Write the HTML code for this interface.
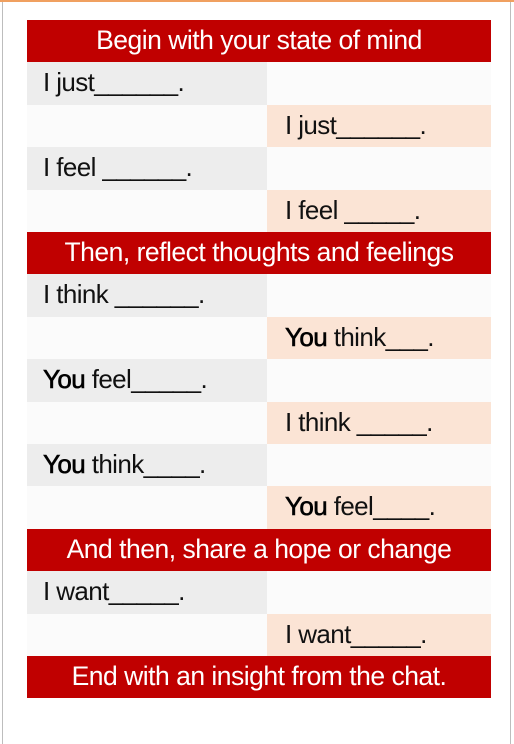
<!DOCTYPE html>
<html><head><meta charset="utf-8"><style>
html,body{margin:0;padding:0;}
body{width:514px;height:744px;position:relative;background:#fff;overflow:hidden;font-family:"Liberation Sans",sans-serif;}
.top{position:absolute;left:0;top:0;width:514px;height:2px;background:#f0a060;}
.lb{position:absolute;left:2px;top:2px;width:1px;height:742px;background:#bdbdbd;}
.rb{position:absolute;left:510px;top:2px;width:1px;height:742px;background:#bdbdbd;}
.r{position:absolute;left:27px;width:464px;height:42.4px;}
.h{background:#c00000;color:#fff;text-align:center;font-size:26.5px;line-height:40px;letter-spacing:-0.5px;white-space:nowrap;}
.c{position:absolute;top:0;height:42.4px;font-size:26px;line-height:40px;color:#111;letter-spacing:-0.6px;white-space:nowrap;}
.L{left:0;width:240px;padding-left:16px;box-sizing:border-box;}
.R{left:240px;width:224px;padding-left:18px;box-sizing:border-box;}
.g{background:#ededed;}
.p{background:#fbe4d5;}
.w{background:#fbfbfb;}
b{font-weight:normal;color:#000;-webkit-text-stroke:0.6px #000;}
</style></head><body>
<div class="top"></div><div class="lb"></div><div class="rb"></div>
<div class="r h" style="top:20px">Begin with your state of mind</div>
<div class="r" style="top:62.4px"><div class="c L g">I just______.</div><div class="c R w"></div></div>
<div class="r" style="top:104.8px"><div class="c L w"></div><div class="c R p">I just______.</div></div>
<div class="r" style="top:147.2px"><div class="c L g">I feel ______.</div><div class="c R w"></div></div>
<div class="r" style="top:189.6px"><div class="c L w"></div><div class="c R p">I feel _____.</div></div>
<div class="r h" style="top:232px">Then, reflect thoughts and feelings</div>
<div class="r" style="top:274.4px"><div class="c L g">I think ______.</div><div class="c R w"></div></div>
<div class="r" style="top:316.8px"><div class="c L w"></div><div class="c R p"><b>You</b> think___.</div></div>
<div class="r" style="top:359.2px"><div class="c L g"><b>You</b> feel_____.</div><div class="c R w"></div></div>
<div class="r" style="top:401.6px"><div class="c L w"></div><div class="c R p">I think _____.</div></div>
<div class="r" style="top:444px"><div class="c L g"><b>You</b> think____.</div><div class="c R w"></div></div>
<div class="r" style="top:486.4px"><div class="c L w"></div><div class="c R p"><b>You</b> feel____.</div></div>
<div class="r h" style="top:528.8px">And then, share a hope or change</div>
<div class="r" style="top:571.2px"><div class="c L g">I want_____.</div><div class="c R w"></div></div>
<div class="r" style="top:613.6px"><div class="c L w"></div><div class="c R p">I want_____.</div></div>
<div class="r h" style="top:656px">End with an insight from the chat.</div>
</body></html>
